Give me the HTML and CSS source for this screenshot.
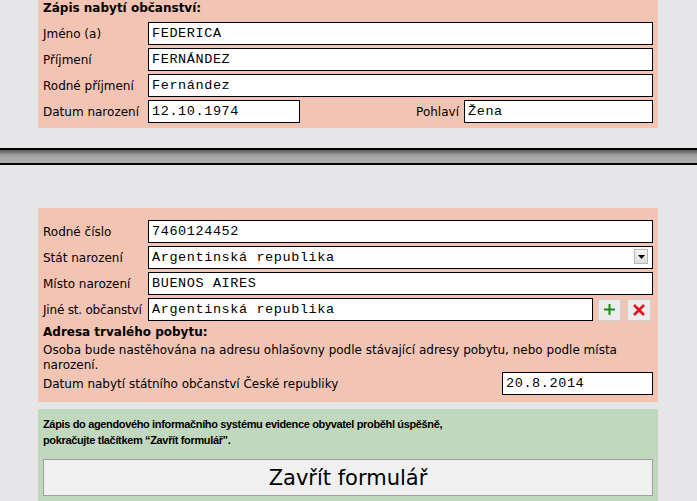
FILE: index.html
```html
<!DOCTYPE html>
<html>
<head>
  <meta charset="utf-8">
  <title>Zápis nabytí občanství</title>
  <link rel="stylesheet" href="styles.css">
</head>
<body>
  <div class="panel top">
    <h2>Zápis nabytí občanství:</h2>
    <div class="row">
      <label>Jméno (a)</label>
      <input type="text" value="FEDERICA">
    </div>
    <div class="row">
      <label>Příjmení</label>
      <input type="text" value="FERNÁNDEZ">
    </div>
    <div class="row">
      <label>Rodné příjmení</label>
      <input type="text" value="Fernández">
    </div>
    <div class="row birth">
      <label>Datum narození</label>
      <input type="text" value="12.10.1974">
      <label class="right">Pohlaví</label>
      <input type="text" value="Žena">
    </div>
  </div>

  <div class="splitter"></div>

  <div class="panel second">
    <div class="row">
      <label>Rodné číslo</label>
      <input type="text" value="7460124452">
    </div>
    <div class="row">
      <label>Stát narození</label>
      <div class="select">
        <select>
          <option>Argentinská republika</option>
        </select>
        <span class="arrow">
          <svg width="7" height="4" viewBox="0 0 7 4"><path d="M0 0h7L3.5 4z" fill="#000"/></svg>
        </span>
      </div>
    </div>
    <div class="row">
      <label>Místo narození</label>
      <input type="text" value="BUENOS AIRES">
    </div>
    <div class="row">
      <label class="tight">Jiné st. občanství</label>
      <div class="with-buttons">
        <input type="text" value="Argentinská republika">
        <button class="icon add" title="Přidat">
          <svg width="11" height="11" viewBox="0 0 11 11"><path d="M5.5 0v11M0 5.5h11" stroke="#1a8a1a" stroke-width="2"/></svg>
        </button>
        <button class="icon remove" title="Odebrat">
          <svg width="12" height="12" viewBox="0 0 12 12"><path d="M1 1l10 10M11 1L1 11" stroke="#e0141e" stroke-width="2.6"/></svg>
        </button>
      </div>
    </div>
    <h3>Adresa trvalého pobytu:</h3>
    <p>Osoba bude nastěhována na adresu ohlašovny podle stávající adresy pobytu, nebo podle místa narození.</p>
    <div class="row acquired">
      <label>Datum nabytí státního občanství České republiky</label>
      <input type="text" value="20.8.2014">
    </div>
  </div>

  <div class="panel success">
    <p>Zápis do agendového informačního systému evidence obyvatel proběhl úspěšně, pokračujte tlačítkem “Zavřít formulář”.</p>
    <button class="close">Zavřít formulář</button>
  </div>
</body>
</html>
```

FILE: styles.css
```css
body {
  margin: 0;
  background: #e6e6e8;
  font-family: "DejaVu Sans", Verdana, sans-serif;
  font-size: 12px;
  color: #000;
}
.panel {
  width: 620px;
  margin-left: 38px;
  box-sizing: border-box;
  background: #f2c4b4;
  padding: 0 5px 5px 5px;
}
h2, h3 {
  margin: 0;
  font-size: 12px;
  font-weight: bold;
}
h2 {
  line-height: 16px;
  margin-bottom: 6px;
}
.row {
  display: grid;
  grid-template-columns: 105px 1fr;
  align-items: center;
  margin-bottom: 3px;
}
.row:last-child {
  margin-bottom: 0;
}
label {
  line-height: 15px;
  padding-top: 2px;
  white-space: nowrap;
}
label.tight {
  letter-spacing: -0.2px;
}
input, select {
  height: 23px;
  box-sizing: border-box;
  border: 1px solid #000;
  background: #fff;
  padding: 0 3px;
  font-family: "Liberation Mono", "Courier New", monospace;
  font-size: 13.5px;
  letter-spacing: 0.6px;
  width: 100%;
  border-radius: 0;
  outline: none;
}
.row.birth {
  grid-template-columns: 105px 152px 1fr 189px;
}
.row.birth .right {
  text-align: right;
  padding-right: 5px;
}
.splitter {
  margin-top: 20px;
  height: 17px;
  background: linear-gradient(#000 0, #000 2px, #5a5a5a 2px, #9e9e9e 7px, #aaa 10px, #aaa 15px, #000 15px);
}
.panel.second {
  margin-top: 43px;
  padding-top: 12px;
  padding-bottom: 7px;
}
.select {
  position: relative;
}
.select select {
  appearance: none;
  -webkit-appearance: none;
  display: block;
}
.select .arrow {
  position: absolute;
  right: 5px;
  top: 3px;
  width: 14px;
  height: 15px;
  box-sizing: border-box;
  border: 1px solid #b8b8b8;
  background: linear-gradient(#f6f6f6, #dcdcdc);
  display: flex;
  align-items: center;
  justify-content: center;
  pointer-events: none;
}
.with-buttons {
  display: flex;
  align-items: center;
  padding-right: 2px;
}
.with-buttons input {
  flex: 1;
  margin-right: 5px;
}
.icon {
  height: 22px;
  padding: 0;
  border: 1px solid #d2d2d2;
  background: #ececec;
  display: flex;
  align-items: center;
  justify-content: center;
}
.icon.add {
  width: 23px;
  margin-right: 6px;
}
.icon.remove {
  width: 24px;
}
h3 {
  margin-top: 4px;
  line-height: 15px;
}
.second p {
  margin: 3px 0 0 0;
  line-height: 15px;
}
.row.acquired {
  grid-template-columns: 1fr 151px;
  align-items: start;
  margin-top: -1px;
}
.row.acquired label {
  padding-top: 5px;
}
.panel.success {
  margin-top: 7px;
  background: #c0d9be;
  padding-top: 7px;
  padding-bottom: 20px;
}
.success p {
  margin: 0;
  font-family: "Liberation Sans", Arial, sans-serif;
  font-weight: bold;
  font-size: 11px;
  line-height: 16px;
  width: 440px;
  letter-spacing: -0.35px;
}
.close {
  display: block;
  width: 100%;
  height: 37px;
  margin-top: 11px;
  background: #f0f0f0;
  border: 1px solid #a0a0a0;
  font-family: "DejaVu Sans", Verdana, sans-serif;
  font-size: 21px;
  color: #000;
  cursor: pointer;
}
```
